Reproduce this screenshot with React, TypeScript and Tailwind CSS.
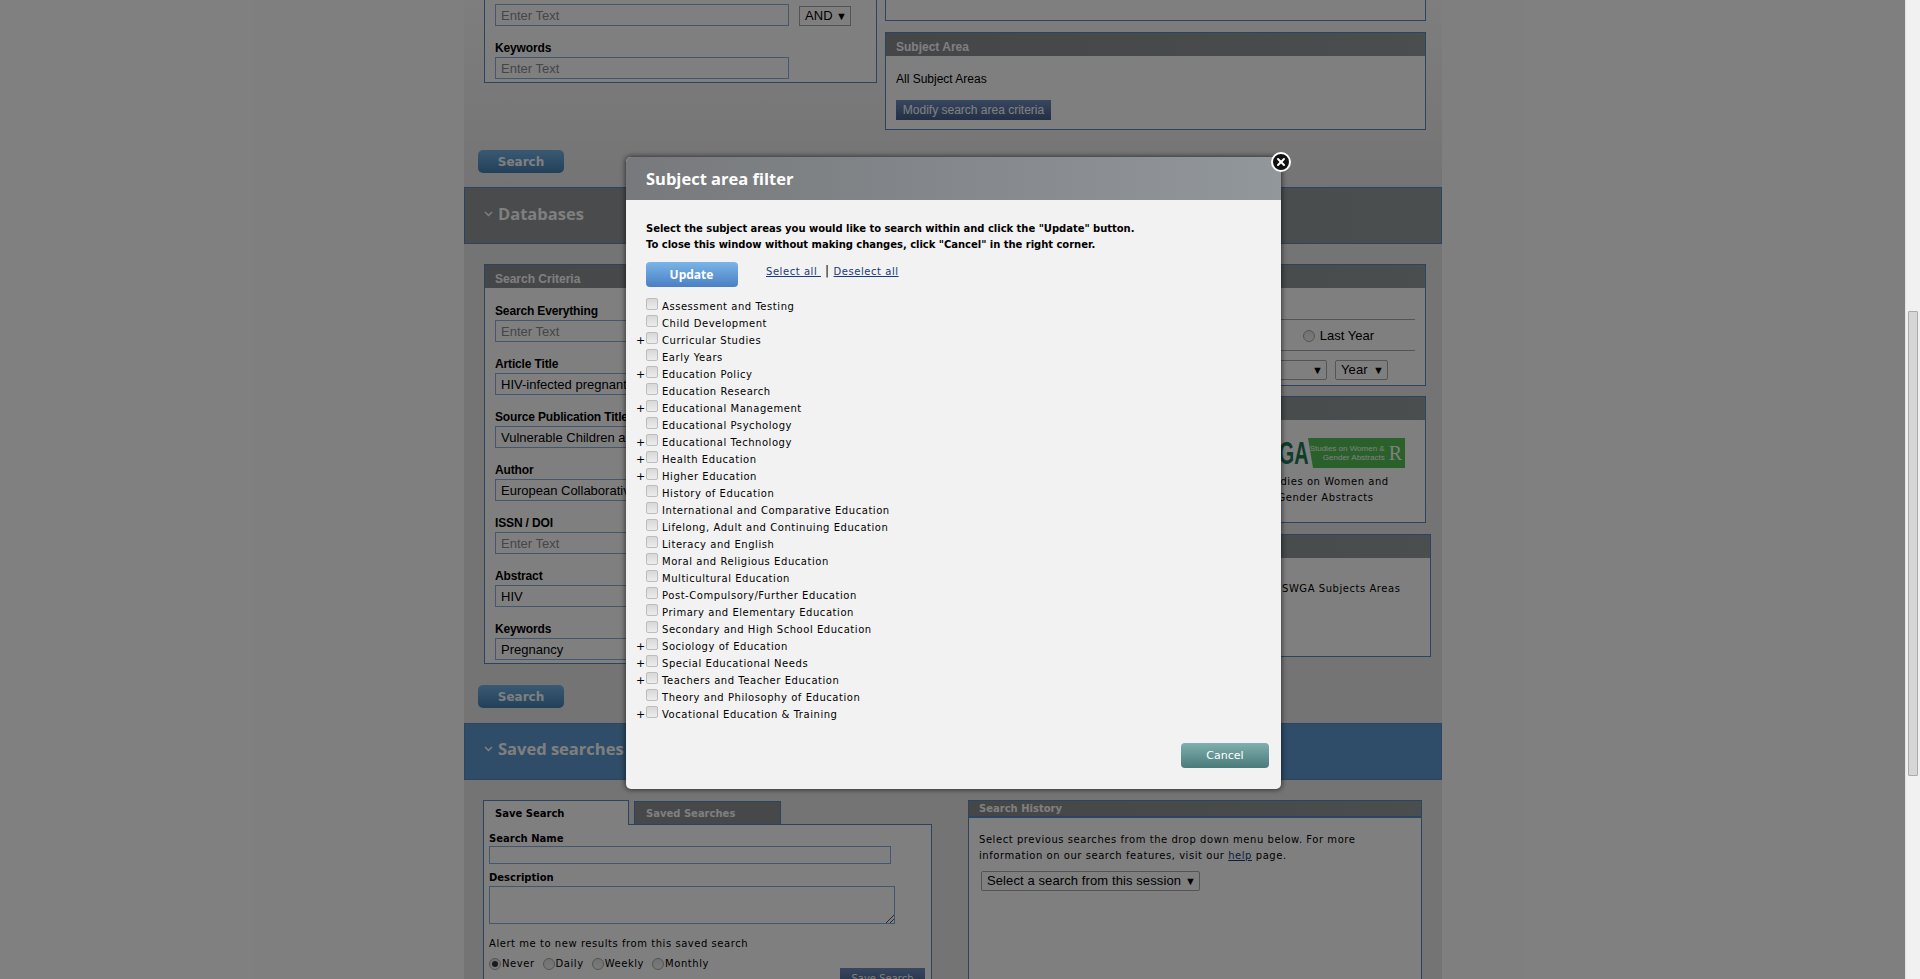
import { X } from "lucide-react";

const sans = "font-['Liberation_Sans',Arial,sans-serif]";
const wide = "font-['DejaVu_Sans',Verdana,sans-serif]";
const title = "font-['Open_Sans',Verdana,sans-serif]";

const subjects = [
  { name: "Assessment and Testing" },
  { name: "Child Development" },
  { name: "Curricular Studies", more: true },
  { name: "Early Years" },
  { name: "Education Policy", more: true },
  { name: "Education Research" },
  { name: "Educational Management", more: true },
  { name: "Educational Psychology" },
  { name: "Educational Technology", more: true },
  { name: "Health Education", more: true },
  { name: "Higher Education", more: true },
  { name: "History of Education" },
  { name: "International and Comparative Education" },
  { name: "Lifelong, Adult and Continuing Education" },
  { name: "Literacy and English" },
  { name: "Moral and Religious Education" },
  { name: "Multicultural Education" },
  { name: "Post-Compulsory/Further Education" },
  { name: "Primary and Elementary Education" },
  { name: "Secondary and High School Education" },
  { name: "Sociology of Education", more: true },
  { name: "Special Educational Needs", more: true },
  { name: "Teachers and Teacher Education", more: true },
  { name: "Theory and Philosophy of Education" },
  { name: "Vocational Education & Training", more: true },
];

const criteria = [
  { label: "Search Everything", value: "" },
  { label: "Article Title", value: "HIV-infected pregnant women" },
  { label: "Source Publication Title", value: "Vulnerable Children and Youth Studies" },
  { label: "Author", value: "European Collaborative Study" },
  { label: "ISSN / DOI", value: "" },
  { label: "Abstract", value: "HIV" },
  { label: "Keywords", value: "Pregnancy" },
];

function TextField({ value = "" }: { value?: string }) {
  return (
    <input
      readOnly
      value={value}
      placeholder="Enter Text"
      className={`${sans} block h-[22px] w-[294px] border border-[#8aaedd] bg-white px-[5px] text-[13px] text-black placeholder:text-[#8c8c8c]`}
    />
  );
}

function FakeSelect({ label, className = "" }: { label: string; className?: string }) {
  return (
    <div className={`${sans} flex h-[20px] items-center justify-between rounded-[2px] border border-[#a8a8a8] bg-white pl-[5px] pr-[3px] text-[13px] tracking-[0.1px] text-black ${className}`}>
      <span className="whitespace-nowrap">{label}</span>
      <span className="text-[11px] leading-none">▼</span>
    </div>
  );
}

function Panel({ title: heading, className = "", children }: { title: string; className?: string; children: React.ReactNode }) {
  return (
    <div className={`border border-[#5a86c4] bg-white ${className}`}>
      <div className={`${sans} flex h-[23px] items-center bg-gradient-to-r from-[#8a8c90] to-[#949c9e] px-[10px] pt-[4px] text-[12px] font-bold text-white`}>
        {heading}
      </div>
      {children}
    </div>
  );
}

function SearchButton() {
  return (
    <button className={`${wide} ml-[14px] block h-[23px] w-[86px] rounded-[5px] bg-gradient-to-b from-[#74b4e8] to-[#4480b4] text-[12px] font-bold text-white`}>
      Search
    </button>
  );
}

function Band({ title: heading, className = "" }: { title: string; className?: string }) {
  return (
    <div className={`${title} flex h-[57px] items-center border border-[#5a86c4] pl-[19px] text-[16.5px] font-bold text-white ${className}`}>
      <svg width="9" height="6" viewBox="0 0 9 6" className="mr-[5px]" fill="none" stroke="white" strokeWidth="1.5">
        <path d="M1 1l3.5 3.5L8 1" />
      </svg>
      {heading}
    </div>
  );
}

function Radio({ checked = false }: { checked?: boolean }) {
  return (
    <span className="flex h-[12px] w-[12px] items-center justify-center rounded-full border border-[#a8a8a8] bg-gradient-to-b from-[#e4e4e4] to-[#f4f4f4]">
      {checked && <span className="h-[6px] w-[6px] rounded-full bg-[#333]" />}
    </span>
  );
}

function SubjectModal() {
  return (
    <div className="absolute left-[626px] top-[157px] z-20 flex h-[632px] w-[655px] flex-col rounded-[5px] bg-[#f2f2f2] shadow-[0_0_5px_1px_rgba(0,0,0,0.55)]">
      <button className="absolute -right-[10px] -top-[5px] flex h-[20px] w-[20px] items-center justify-center rounded-full border-2 border-white bg-[#111] text-white">
        <X size={12} strokeWidth={4} />
      </button>
      <div className={`${title} flex h-[43px] items-center rounded-t-[5px] bg-gradient-to-r from-[#77797c] to-[#92979b] pl-[20px] pt-[2px] text-[16.5px] font-bold text-white`}>
        Subject area filter
      </div>
      <div className="relative flex-1 pl-[20px]">
        <div className={`${wide} pt-[21px] text-[10px] font-bold leading-[16px] tracking-[-0.03px] text-black`}>
          <p>Select the subject areas you would like to search within and click the "Update" button.</p>
          <p>To close this window without making changes, click "Cancel" in the right corner.</p>
        </div>
        <div className="mt-[9px] flex items-start">
          <button className={`${title} h-[25px] w-[92px] rounded-[4px] bg-gradient-to-b from-[#7ab5e6] to-[#4a7fc4] pr-[1px] text-[12px] font-bold text-white`}>
            Update
          </button>
          <div className={`${wide} ml-[28px] flex items-center text-[10px] tracking-[0.55px] text-[#1a3a7a]`}>
            <a className="whitespace-pre underline">Select all </a>
            <span className="mx-[4px] text-[12px] text-black">|</span>
            <a className="underline">Deselect all</a>
          </div>
        </div>
        <ul className="mt-[11px]">
          {subjects.map(s => (
            <li key={s.name} className="relative flex h-[17px] items-start">
              {s.more && <span className={`${wide} absolute -left-[10px] top-[2px] text-[11px] leading-[14px] text-black`}>+</span>}
              <span className="mt-0 h-[12px] w-[12px] rounded-[2px] border border-[#bdbdbd] bg-gradient-to-b from-[#d8d8d8] to-[#ececec]" />
              <span className={`${wide} ml-[4px] mt-[3px] text-[10px] leading-[12px] tracking-[0.55px] text-black`}>{s.name}</span>
            </li>
          ))}
        </ul>
        <button className={`${wide} absolute right-[12px] top-[543px] h-[25px] w-[88px] rounded-[4px] bg-gradient-to-b from-[#7fb0ae] to-[#4a7a7a] pt-[2px] text-[11px] text-white`}>
          Cancel
        </button>
      </div>
    </div>
  );
}

export default function App() {
  return (
    <div className="flex h-[979px] overflow-hidden bg-white">
      <main className="relative h-full w-[1905px] overflow-hidden">
        <div className="ml-[464px] h-full w-[978px] bg-gradient-to-b from-[#fcfcfc] via-[#e8e8e8] via-20% to-[#e8e8e8]">
          <div className="flex h-[150px] items-start pl-[20px]">
            <div className="h-[83px] w-[393px] border border-[#5a86c4] border-t-0 bg-white pl-[10px]">
              <div className="flex items-start pt-[4px]">
                <TextField />
                <FakeSelect label="AND" className="ml-[10px] mt-[2px] w-[52px] rounded-none border-[#5a86c4]" />
              </div>
              <div className={`${sans} mt-[16px] text-[12px] font-bold leading-[13px] tracking-[-0.15px] text-black`}>Keywords</div>
              <div className="mt-[2px]"><TextField /></div>
            </div>
            <div className="ml-[8px] w-[541px]">
              <div className="h-[21px] border border-t-0 border-[#5a86c4] bg-white" />
              <Panel title="Subject Area" className="mt-[11px] h-[98px]">
                <div className={`${sans} pl-[10px] pt-[16px] text-[12px] leading-[14px] text-black`}>All Subject Areas</div>
                <button className={`${sans} ml-[10px] mt-[14px] block h-[20px] w-[155px] bg-gradient-to-b from-[#6f8fc0] to-[#465f8c] text-[12px] text-white`}>
                  Modify search area criteria
                </button>
              </Panel>
            </div>
          </div>

          <SearchButton />
          <Band title="Databases" className="mt-[14px] bg-gradient-to-r from-[#929698] to-[#949c9e] pb-[3px]" />

          <div className="mt-[20px] flex h-[421px] items-start pl-[20px]">
            <Panel title="Search Criteria" className="h-[400px] w-[393px]">
              <div className="pl-[10px] pt-[17px]">
                {criteria.map(c => (
                  <div key={c.label} className="mb-[16px]">
                    <div className={`${sans} mb-[2px] text-[12px] font-bold leading-[13px] tracking-[-0.15px] text-black`}>{c.label}</div>
                    <TextField value={c.value} />
                  </div>
                ))}
              </div>
            </Panel>
            <div className="ml-[8px] w-[546px]">
              <Panel title="Date Range" className="h-[122px] w-[541px]">
                <div className={`${sans} mx-[10px] mt-[31px] flex h-[32px] items-center justify-end gap-[5px] border-y border-[#a8a8a8] pr-[41px] pt-[1px] text-[13px] text-black`}>
                  <Radio />
                  Last Year
                </div>
                <div className="mr-[10px] mt-[9px] flex justify-end gap-[8px]">
                  <FakeSelect label="Month" className="w-[100px]" />
                  <FakeSelect label="Year" className="mr-[27px] w-[53px]" />
                </div>
              </Panel>
              <Panel title="Publisher" className="mt-[10px] h-[127px] w-[541px]">
                <div className="flex justify-end pr-[20px] pt-[18px]">
                  <div className="relative flex h-[30px] w-[209px] items-stretch">
                    <span className={`${sans} absolute right-[96px] top-0 origin-right scale-x-[0.62] text-[32px] font-bold leading-[30px] text-[#1e7a54]`}>SWGA</span>
                    <div className={`${sans} absolute right-0 top-0 flex h-[30px] w-[97px] items-center justify-end gap-[4px] bg-[#54c054] pr-[3px] text-right text-[8px] leading-[9px] text-[#ffffff] [clip-path:polygon(0_0,100%_0,100%_100%,5px_100%)]`}>
                      <span className="whitespace-nowrap">Studies on Women &amp;<br />Gender Abstracts</span>
                      <span className="font-['Liberation_Serif',serif] text-[20px] leading-none">R</span>
                    </div>
                  </div>
                </div>
                <p className={`${wide} mt-[6px] pl-[340px] text-center text-[10px] leading-[16px] tracking-[0.55px] text-black`}>
                  Studies on Women and<br />Gender Abstracts
                </p>
              </Panel>
              <Panel title="Subjects" className="mt-[11px] h-[123px] w-[546px]">
                <p className={`${wide} pl-[396px] pt-[24px] text-[10px] leading-[14px] tracking-[0.55px] text-black`}>SWGA Subjects Areas</p>
              </Panel>
            </div>
          </div>

          <SearchButton />
          <Band title="Saved searches" className="mt-[15px] h-[56px] bg-[#5e9ad0] pb-[5px]" />

          <div className="mt-[20px] flex items-start pl-[19px]">
            <div className="w-[449px]">
              <div className="flex items-end">
                <div className={`${wide} relative z-10 flex h-[25px] w-[146px] items-center border border-b-0 border-[#5a86c4] bg-white pl-[11px] text-[10px] font-bold text-black`}>Save Search</div>
                <div className={`${wide} ml-[5px] flex h-[24px] w-[147px] items-center border border-[#5a86c4] bg-[#8f9093] pl-[11px] text-[10px] font-bold text-white`}>Saved Searches</div>
              </div>
              <div className={`${wide} -mt-[1px] h-[200px] border border-[#5a86c4] bg-white pl-[5px] pr-[6px] text-[10px] tracking-[0.55px] text-black`}>
                <div className="pt-[8px] font-bold leading-[12px] tracking-normal">Search Name</div>
                <div className="mt-[1px] h-[18px] w-[402px] border border-[#8aaedd]" />
                <div className="mt-[8px] font-bold leading-[12px] tracking-normal">Description</div>
                <div className="relative mt-[2px] h-[38px] w-[406px] border border-[#8aaedd]">
                  <svg width="8" height="8" viewBox="0 0 8 8" className="absolute bottom-0 right-0" stroke="#555" strokeWidth="1"><path d="M0 8l8-8M4 8l4-4" /></svg>
                </div>
                <div className="mt-[14px] leading-[12px]">Alert me to new results from this saved search</div>
                <div className="relative mt-[6px] flex items-center">
                  <Radio checked /><span className="ml-[1px]">Never</span>
                  <span className="ml-[8px]"><Radio /></span><span className="ml-[1px]">Daily</span>
                  <span className="ml-[8px]"><Radio /></span><span className="ml-[1px]">Weekly</span>
                  <span className="ml-[8px]"><Radio /></span><span className="ml-[1px]">Monthly</span>
                  <button className="absolute left-[351px] top-[12px] h-[20px] w-[85px] bg-gradient-to-b from-[#6f8fc0] to-[#465f8c] tracking-normal text-white">Save Search</button>
                </div>
              </div>
            </div>
            <div className="ml-[36px] w-[454px]">
              <div className={`${wide} flex h-[18px] items-center border border-b-2 border-[#5a86c4] bg-gradient-to-r from-[#8a8c90] to-[#949c9e] pl-[10px] text-[10px] font-bold text-white`}>Search History</div>
              <div className={`${wide} h-[200px] border border-t-0 border-[#5a86c4] bg-white px-[10px] pt-[14px] text-[10px] leading-[16px] tracking-[0.55px] text-black`}>
                <p>Select previous searches from the drop down menu below. For more</p>
                <p>information on our search features, visit our <a className="text-[#1a3a7a] underline">help</a> page.</p>
                <FakeSelect label="Select a search from this session" className="ml-[2px] mt-[7px] w-[219px]" />
              </div>
            </div>
          </div>
        </div>
        <div className="absolute inset-0 z-10 bg-black/50" />
        <SubjectModal />
      </main>
      <div className="flex-1 border-l border-[#e4e4e4] bg-[#f1f1f1] pl-[2px] pt-[311px]">
        <div className="h-[465px] w-[10px] rounded-[1px] border border-[#aaa] bg-[#d6d6d6]" />
      </div>
    </div>
  );
}
